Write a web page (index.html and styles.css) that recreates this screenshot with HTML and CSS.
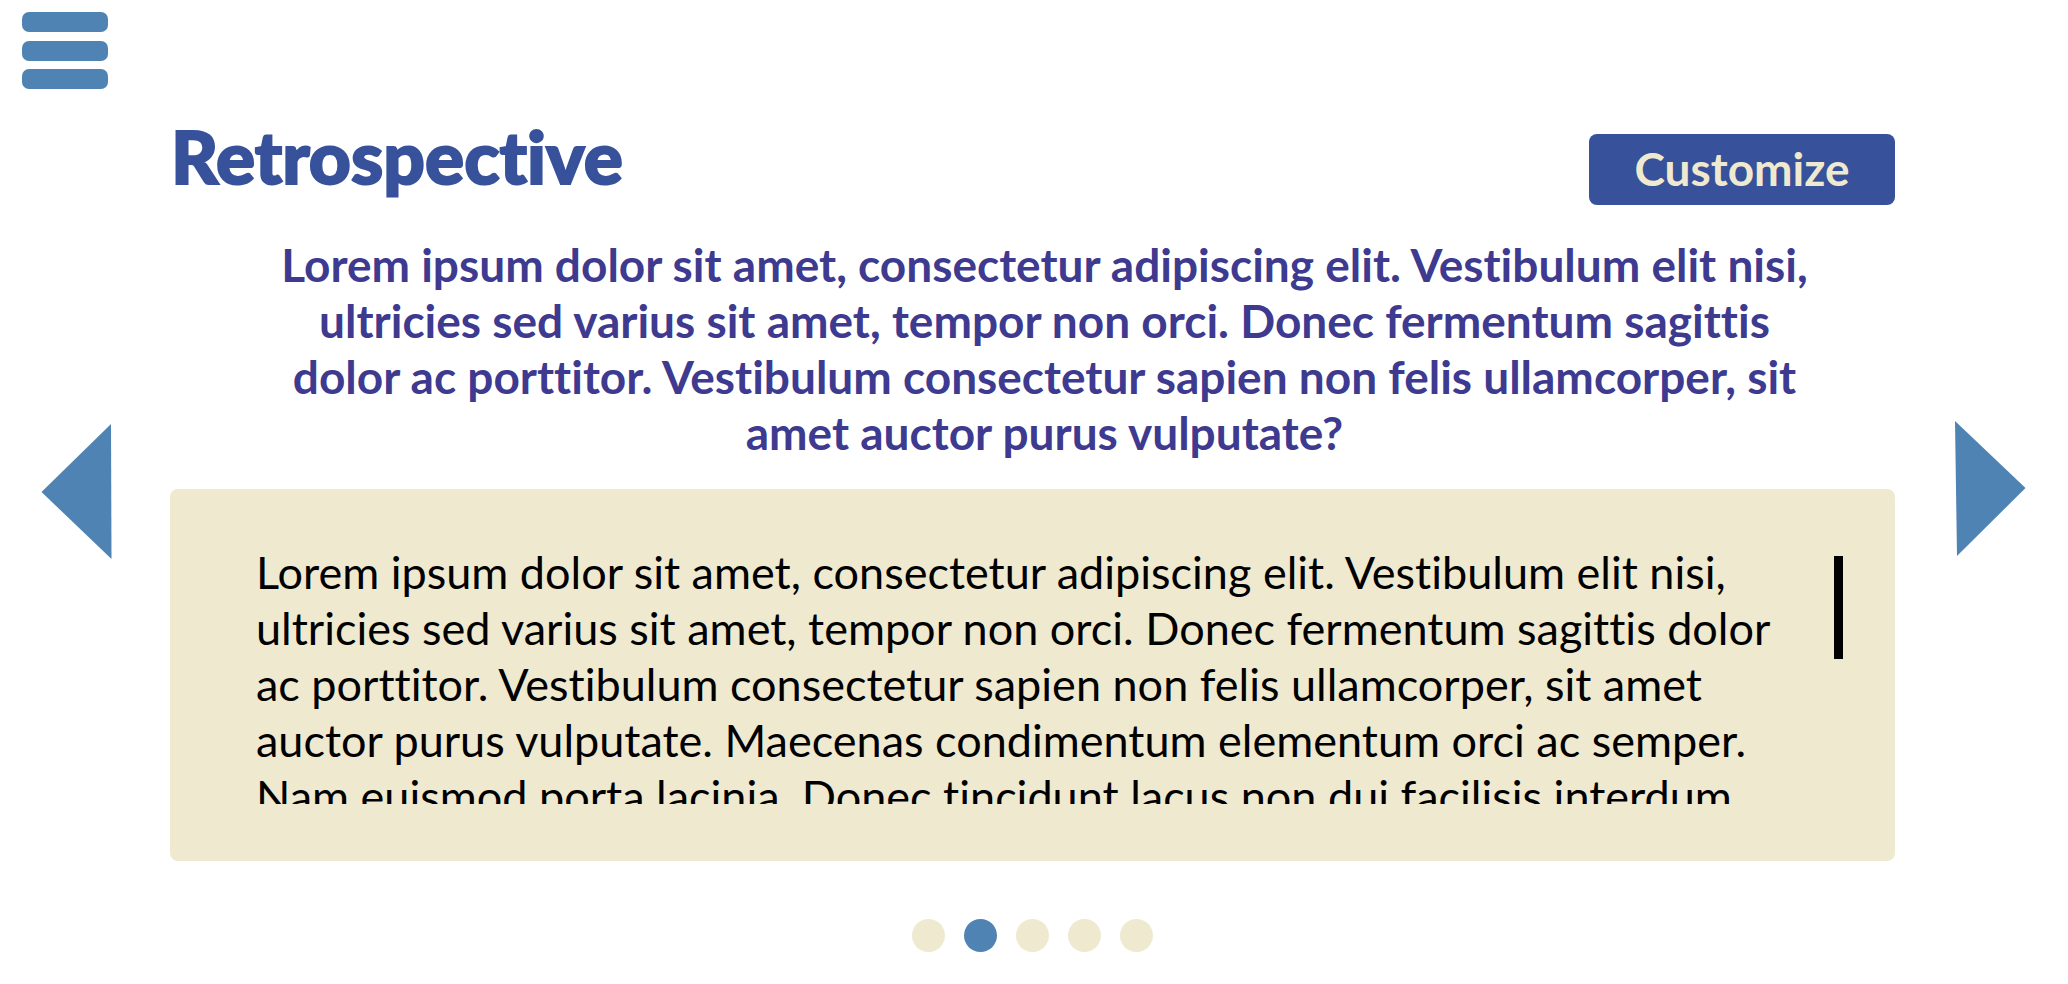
FILE: index.html
```html
<!DOCTYPE html>
<html lang="en">
<head>
<meta charset="utf-8">
<title>Retrospective</title>
<link rel="stylesheet" href="styles.css">
</head>
<body>
<header class="topbar">
  <button class="menu" type="button" aria-label="Menu"><span class="menu-bar"></span><span class="menu-bar"></span><span class="menu-bar"></span></button>
</header>
<div class="stage">
  <button class="arrow arrow-prev" type="button" aria-label="Previous question">
    <svg width="72" height="138" viewBox="0 0 72 138"><path d="M0.500 70 70 2 70.500 137Z"/></svg>
  </button>
  <main class="content">
    <div class="heading">
      <h1 class="title">Retrospective</h1>
      <button class="customize" type="button">Customize</button>
    </div>
    <h2 class="question">Lorem ipsum dolor sit amet, consectetur adipiscing elit. Vestibulum elit nisi, ultricies sed varius sit amet, tempor non orci. Donec fermentum sagittis dolor ac porttitor. Vestibulum consectetur sapien non felis ullamcorper, sit amet auctor purus vulputate?</h2>
    <section class="answer">
      <p class="answer-text">Lorem ipsum dolor sit amet, consectetur adipiscing elit. Vestibulum elit nisi, ultricies sed varius sit amet, tempor non orci. Donec fermentum sagittis dolor ac porttitor. Vestibulum consectetur sapien non felis ullamcorper, sit amet auctor purus vulputate. Maecenas condimentum elementum orci ac semper. Nam euismod porta lacinia. Donec tincidunt lacus non dui facilisis interdum</p>
      <span class="thumb"></span>
    </section>
    <nav class="dots" aria-label="Questions">
      <button class="dot" type="button" aria-label="Question 1"></button>
      <button class="dot dot-current" type="button" aria-label="Question 2" aria-current="true"></button>
      <button class="dot" type="button" aria-label="Question 3"></button>
      <button class="dot" type="button" aria-label="Question 4"></button>
      <button class="dot" type="button" aria-label="Question 5"></button>
    </nav>
  </main>
  <button class="arrow arrow-next" type="button" aria-label="Next question">
    <svg width="72" height="138" viewBox="0 0 72 138"><path d="M0 1 70.500 68 2 136Z"/></svg>
  </button>
</div>
</body>
</html>
```
FILE: styles.css
```css
* { box-sizing: border-box; }
body {
  margin: 0;
  background: #fff;
  color: #000;
  font-family: Lato, "Open Sans", sans-serif;
  font-size: 46px;
  line-height: 56px;
  font-variant-ligatures: no-common-ligatures;
}
button {
  border: 0;
  padding: 0;
  background: none;
  font: inherit;
  font-variant-ligatures: inherit;
  cursor: pointer;
}
.topbar { padding: 12px 22px 0; }
.menu {
  display: flex;
  flex-direction: column;
  justify-content: space-between;
  width: 86px;
  height: 77px;
}
.menu-bar {
  width: 100%;
  height: 20px;
  border-radius: 7px;
  background: #4f83b3;
}
.stage {
  display: grid;
  grid-template-columns: 170px 1fr 173px;
  align-items: start;
}
.arrow {
  display: flex;
  margin-top: 333px;
  fill: #4f83b3;
}
.arrow-prev { padding-left: 41px; }
.arrow-next {
  margin-top: 331px;
  padding-left: 60px;
}
.content { padding-top: 45px; }
.heading {
  display: flex;
  justify-content: space-between;
  align-items: flex-start;
}
.title {
  margin: 0;
  padding-left: 1px;
  color: #37519b;
  font-size: 73px;
  line-height: 44px;
  font-weight: 900;
  -webkit-text-stroke: 2px #37519b;
}
.customize {
  width: 306px;
  padding: 7px 8px 8px;
  border-radius: 8px;
  background: #37519b;
  color: #efe9d0;
  font-weight: 700;
}
.question {
  margin: 32px 0 0;
  padding: 0 68px 0 92px;
  color: #3d3a8f;
  font-size: 46px;
  font-weight: 700;
  text-align: center;
}
.answer {
  display: flex;
  justify-content: space-between;
  margin-top: 28px;
  padding: 55px 52px 57px 86px;
  border-radius: 8px;
  background: #efe9d0;
}
.answer-text {
  flex: 0 1 1530px;
  height: 260px;
  margin: 0;
  overflow: hidden;
  font-size: 45px;
}
.thumb {
  width: 9px;
  height: 103px;
  margin-top: 12px;
  background: #000;
}
.dots {
  display: flex;
  justify-content: center;
  gap: 19px;
  padding-top: 58px;
}
.dot {
  width: 33px;
  height: 33px;
  border-radius: 50%;
  background: #efe9d0;
}
.dot-current { background: #4f83b3; }
```
